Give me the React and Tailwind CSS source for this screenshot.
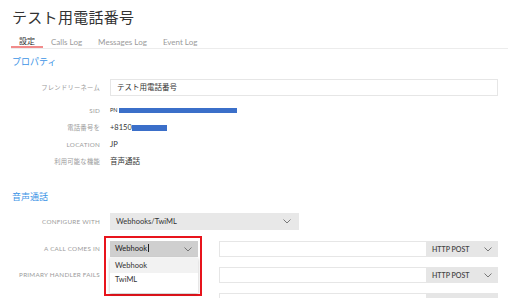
const FONT = { fontFamily: 'Lato, "Noto Sans CJK JP", sans-serif' }

function Chevron() {
  return (
    <svg width="8" height="5" viewBox="0 0 8 5" className="shrink-0">
      <polyline points="0.5,0.5 4,4 7.5,0.5" fill="none" stroke="#6b6b6b" strokeWidth="0.9" />
    </svg>
  )
}

function Label({ children }) {
  return (
    <div className="flex w-[88px] shrink-0 justify-end whitespace-nowrap text-[6.3px] uppercase tracking-[0.25px] text-[#9b9b9b]">
      {children}
    </div>
  )
}

function Row({ label, className = '', children }) {
  return (
    <div className={`flex items-center gap-[10px] ${className}`}>
      <Label>{label}</Label>
      {children}
    </div>
  )
}

function UrlWithMethod({ showText = true }) {
  return (
    <div className="ml-[11px] flex h-full w-[287px]">
      <div className="h-full flex-1 border border-[#e6e6e6] bg-white" />
      <div className="flex h-full w-[71px] items-center justify-between bg-[#e6e6e6] pl-[5px] pr-[6px]">
        {showText && (
          <>
            <span className="text-[7px] font-semibold text-[#444]">HTTP POST</span>
            <Chevron />
          </>
        )}
      </div>
    </div>
  )
}

export default function App() {
  const tabs = ['設定', 'Calls Log', 'Messages Log', 'Event Log']

  return (
    <div className="h-[298px] w-[515px] overflow-hidden bg-white pl-3 pr-[7px] pt-[8px]" style={FONT}>
      <h1 className="h-[18px] text-[15px] leading-[18px] tracking-[0.3px] text-[#333]">テスト用電話番号</h1>

      {/* Tabs */}
      <div className="-ml-px mt-[10px] flex h-[13px] border-b border-[#ececec]">
        {tabs.map((t, i) => (
          <div
            key={t}
            className={`flex h-full items-center px-2 text-[8px] ${
              i === 0 ? 'border-b-2 border-[#f28b8b] text-[#333]' : 'text-[#9a9a9a]'
            }`}
          >
            {t}
          </div>
        ))}
      </div>

      {/* Properties */}
      <div className="mt-[7px] h-[12px] text-[9px] leading-[12px] text-[#3c94e6]">プロパティ</div>

      <div className="w-[486px]">
        <Row label="フレンドリーネーム" className="mt-[11px] h-[17px]">
          <div className="flex h-full flex-1 items-center border border-[#e6e6e6] px-[6px] text-[7.5px] text-[#333]">
            テスト用電話番号
          </div>
        </Row>
        <Row label="SID" className="mt-[6px] h-[17px]">
          <div className="flex items-center">
            <span className="text-[5.5px] text-[#333]">PN</span>
            <span className="ml-px h-[5px] w-[118px] bg-[#3b6fc9]" />
          </div>
        </Row>
        <Row label="電話番号を" className="h-[17px]">
          <div className="flex items-center">
            <span className="text-[7.5px] text-[#333]">+8150</span>
            <span className="h-[6px] w-[35px] bg-[#3b6fc9]" />
          </div>
        </Row>
        <Row label="Location" className="h-[17px]">
          <span className="text-[7.5px] text-[#333]">JP</span>
        </Row>
        <Row label="利用可能な機能" className="h-[17px]">
          <span className="text-[7.5px] text-[#333]">音声通話</span>
        </Row>

        {/* Voice */}
        <div className="mt-[21px] h-[12px] text-[9px] leading-[12px] text-[#3c94e6]">音声通話</div>

        <Row label="Configure With" className="mt-[10px] h-[17px]">
          <div className="flex h-full w-[189px] items-center justify-between bg-[#e8e8e8] pl-[6px] pr-[8px]">
            <span className="text-[7.5px] text-[#333]">Webhooks/TwiML</span>
            <Chevron />
          </div>
        </Row>

        <Row label="A Call Comes In" className="mt-[11px] h-[16px]">
          <div className="relative z-10 h-full w-[88px] shrink-0">
            <div className="absolute -left-[6px] -top-[5px] h-[60px] w-[98px] border-2 border-[#e8141c]" />
            <div className="flex h-full items-center justify-between bg-[#cfcfcf] pl-[5px] pr-[6px]">
              <span className="text-[7.5px] text-[#222]">
                Webhook<span className="ml-[0.5px] inline-block h-[8px] w-px translate-y-[1px] bg-[#222]" />
              </span>
              <Chevron />
            </div>
            <div className="absolute left-0 top-[17px] flex h-[35px] w-full flex-col bg-white text-[7.5px] text-[#333] shadow-[0_1px_3px_rgba(0,0,0,0.25)]">
              <div className="flex h-[15px] items-center bg-[#f2f2f2] pl-[5px]">Webhook</div>
              <div className="flex h-[14px] items-center pl-[5px]">TwiML</div>
            </div>
          </div>
          <UrlWithMethod />
        </Row>

        <Row label="Primary Handler Fails" className="mt-[10px] h-[16px]">
          <div className="h-full w-[88px] shrink-0" />
          <UrlWithMethod />
        </Row>

        <Row label="" className="mt-[10px] h-[16px]">
          <div className="h-full w-[88px] shrink-0" />
          <UrlWithMethod showText={false} />
        </Row>
      </div>
    </div>
  )
}
